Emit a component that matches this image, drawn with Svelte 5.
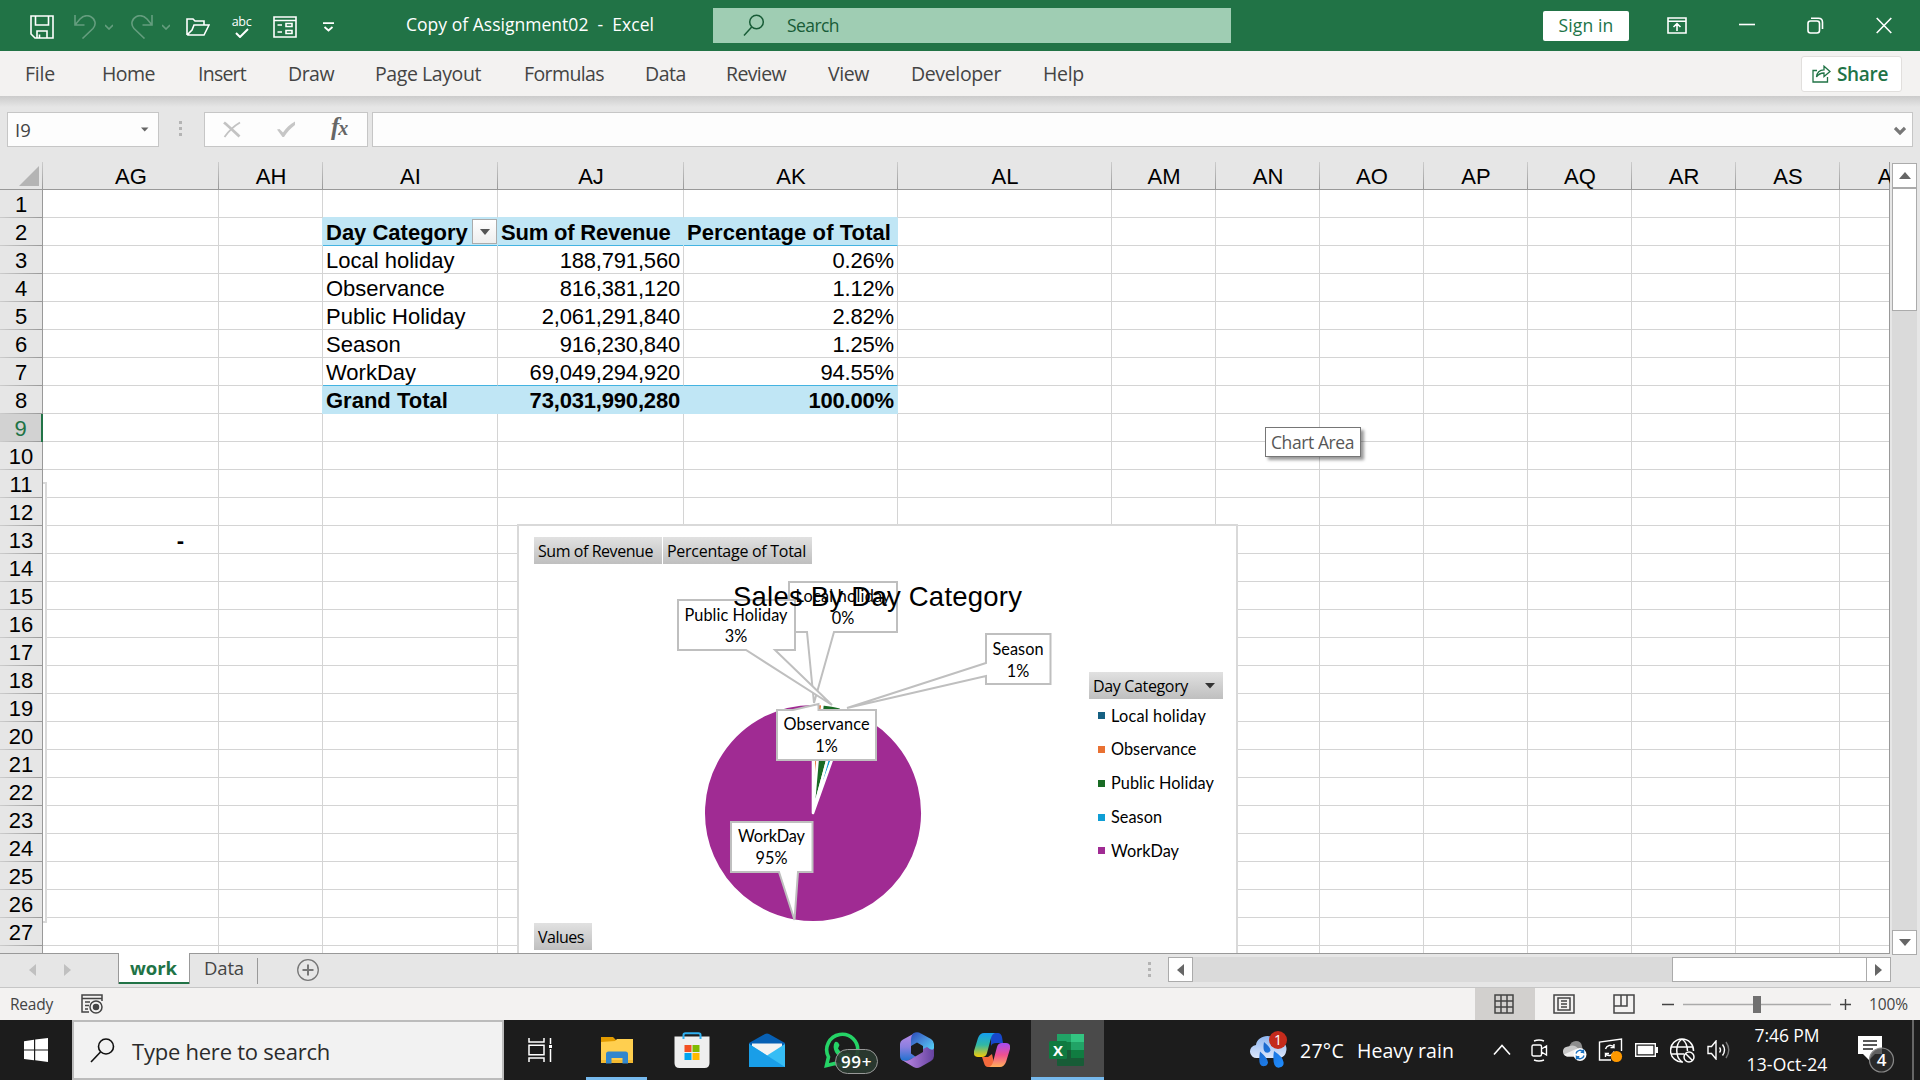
<script>
  const tabs = [
    ['File', 25, 30], ['Home', 102, 53], ['Insert', 198, 48], ['Draw', 288, 46],
    ['Page Layout', 375, 106], ['Formulas', 524, 80], ['Data', 645, 41],
    ['Review', 726, 60], ['View', 828, 41], ['Developer', 911, 90], ['Help', 1043, 41]
  ].map(([name, x, w], i, all) => ({ name, w, gap: i ? x - all[i - 1][1] - all[i - 1][2] : x }));

  const cols = [
    ['AG', 176], ['AH', 104], ['AI', 175], ['AJ', 186], ['AK', 214], ['AL', 214],
    ['AM', 104], ['AN', 104], ['AO', 104], ['AP', 104], ['AQ', 104], ['AR', 104], ['AS', 104], ['AT', 50]
  ].map(([id, w]) => ({ id, w }));
  const rows = Array.from({ length: 28 }, (_, i) => i + 1);

  const pivot = {
    2: ['Day Category', 'Sum of Revenue', 'Percentage of Total'],
    3: ['Local holiday', '188,791,560', '0.26%'],
    4: ['Observance', '816,381,120', '1.12%'],
    5: ['Public Holiday', '2,061,291,840', '2.82%'],
    6: ['Season', '916,230,840', '1.25%'],
    7: ['WorkDay', '69,049,294,920', '94.55%'],
    8: ['Grand Total', '73,031,990,280', '100.00%']
  };
  function cell(r, id) {
    const k = ['AI', 'AJ', 'AK'].indexOf(id);
    if (k >= 0) return pivot[r]?.[k] ?? '';
    return r === 13 && id === 'AG' ? '-' : '';
  }

  const legend = [
    ['Local holiday', '#156082', 95], ['Observance', '#e97132', 85.5], ['Public Holiday', '#196b24', 103],
    ['Season', '#0f9ed5', 51], ['WorkDay', '#a02b93', 68]
  ];

  // Pie geometry, relative to the chart frame
  const cx = 296, cy = 289, radius = 109.3;
  const shares = [[0.26, '#156082'], [1.12, '#e97132'], [2.82, '#196b24'], [1.25, '#0f9ed5'], [94.55, '#a02b93']];
  let start = 0;
  const slices = shares.map(([pct, color]) => {
    const a = (start / 100) * Math.PI * 2;
    start += pct;
    const b = (start / 100) * Math.PI * 2;
    const p = (t) => `${cx + radius * Math.sin(t)} ${cy - radius * Math.cos(t)}`;
    return { color, d: `M${cx} ${cy}L${p(a)}A${radius} ${radius} 0 ${pct > 50 ? 1 : 0} 1 ${p(b)}Z` };
  });

  // Tracks a label so that it takes exactly the given width
  function fit(node, width) {
    const now = node.getBoundingClientRect().width;
    node.style.letterSpacing = `${(width - now) / node.textContent.length}px`;
  }
</script>

<div class="app">
  <header class="titlebar">
    <div class="qat">
      <svg width="24" height="24" viewBox="0 0 24 24" class="ln"><path d="M1 1h22v22H5l-4-4zM5.500 1v9h13V1M7 23v-7h10v7M9.500 19.500V23" /></svg>
      <svg style:margin-left="20px" width="22" height="24" viewBox="0 0 22 24" class="ln dim"><path d="M1 0v10h9.500M1 10L6 4C9 1 13 0 16.500 1.500c5 2.500 6 8 2.500 12L8.500 23.500" /></svg>
      <svg style:margin-left="9px" width="8" height="6" viewBox="0 0 8 6" class="ln dim"><path d="M0 1l4 4 4-4" /></svg>
      <svg style:margin-left="18px" width="22" height="24" viewBox="0 0 22 24" class="ln dim"><path d="M21 0v10h-9.500M21 10L16 4C13 1 9 0 5.500 1.500c-5 2.500-6 8-2.500 12l10.500 10" /></svg>
      <svg style:margin-left="9px" width="8" height="6" viewBox="0 0 8 6" class="ln dim"><path d="M0 1l4 4 4-4" /></svg>
      <svg style:margin-left="16px" width="24" height="18" viewBox="0 0 24 18" class="ln"><path d="M1 17V1h6l2 2h9v4M1 17h17l5-10H8l-2 5-5 5" /></svg>
      <span class="abc"><i>abc</i><svg width="14" height="10" viewBox="0 0 14 10" class="ln"><path d="M1 5l4 4 8-8" stroke-width="2" /></svg></span>
      <svg style:margin-left="21px" width="24" height="22" viewBox="0 0 24 22" class="ln"><path d="M1 1h22v20H1zM1 4.500h22M4.500 9h4.500M4.500 16h4.500M13 7.500h6v3h-6zM13 14.500h6v3h-6z" /></svg>
      <svg style:margin-left="26px" width="11" height="10" viewBox="0 0 11 10" class="ln"><path d="M0 1.200h11M1.500 5l4 3.500 4-3.500" stroke-width="1.800" /></svg>
    </div>
    <div class="doc"><span use:fit={248}>Copy of Assignment02&nbsp; -&nbsp; Excel</span></div>
    <div class="find">
      <svg width="22" height="23" viewBox="0 0 22 23"><circle cx="13.500" cy="8" r="6.800" /><path d="M8.700 13L1 21.500" /></svg>
      <span use:fit={52}>Search</span>
    </div>
    <div class="signin"><span use:fit={55}>Sign in</span></div>
    <div class="win">
      <svg width="20" height="17" viewBox="0 0 20 17" class="ln"><path d="M1 1h18v15H1zM1 4.200h18M10 14V7M6.500 10L10 6.700 13.500 10" /></svg>
      <svg width="16" height="17" viewBox="0 0 16 17" class="ln"><path d="M0 7.500h16" /></svg>
      <svg width="17" height="17" viewBox="0 0 17 17" class="ln"><rect x="1" y="4" width="11.500" height="12" rx="2.500" /><path d="M4 1.200h7.500c3 0 4 1.500 4 4V12" /></svg>
      <svg width="16" height="17" viewBox="0 0 16 17" class="ln"><path d="M.7 1l14.600 15M15.300 1L.7 16" /></svg>
    </div>
  </header>

  <nav class="ribbon">
    {#each tabs as t}
      <span class="tab" style:margin-left="{t.gap}px" style:width="{t.w}px"><span use:fit={t.w}>{t.name}</span></span>
    {/each}
    <div class="share">
      <svg width="19" height="18" viewBox="0 0 19 18"><path d="M5 5.500H1V17h14.500v-5M4.500 12c.5-5 3-7.200 7.500-7.200V1.200l6 5.300-6 5V8C8.500 8 6.500 9 4.500 12z" /></svg>
      <b use:fit={51}>Share</b>
    </div>
  </nav>

  <div class="formula">
    <div class="box name"><span use:fit={16}>I9</span><svg width="9" height="6" viewBox="0 0 9 6"><path d="M1 .5h7.500L4.700 4.500z" fill="#666" /></svg></div>
    <div class="dots"><i></i><i></i><i></i></div>
    <div class="box tools">
      <svg width="18" height="17" viewBox="0 0 18 17"><path d="M1 1.500c5 4 10 9 15.500 14" fill="none" stroke="#c3c3c3" stroke-width="2.800" /><path d="M17 1.500C11 5 5 11 1.500 16" fill="none" stroke="#c3c3c3" stroke-width="1.800" /></svg>
      <svg width="20" height="17" viewBox="0 0 20 17"><path d="M1 8.500l2.500-.5 3.500 3.500C10 7 14 3 19 .5V4C15 7 11 11 8 16H6.500z" fill="#c6c6c6" /></svg>
      <em>f<small>x</small></em>
    </div>
    <div class="box input"><svg width="12" height="10" viewBox="0 0 12 10"><path d="M1 2l5 5 5-5" fill="none" stroke="#777" stroke-width="3.200" /></svg></div>
  </div>

  <main class="sheet">
    <div class="grid">
      <div class="colhead">
        <div class="corner"><svg width="20" height="20" viewBox="0 0 20 20"><path d="M20 0v20H0z" fill="#b4b4b4" /></svg></div>
        {#each cols as c}
          <div class="ch" class:part={c.id === 'AT'} style:width="{c.w}px"><span>{c.id}</span></div>
        {/each}
      </div>
      <div class="cells">
        {#each rows as r}
          <div class="row">
            <div class="rh" class:sel={r === 9}>{r}</div>
            {#each cols as c}
              {@const p = ['AI', 'AJ', 'AK'].includes(c.id)}
              <div
                class="cell"
                class:band={p && (r === 2 || r === 8)}
                class:above={p && r === 1}
                class:under={p && (r === 2 || r === 7)}
                class:num={p && c.id !== 'AI' && r !== 2}
                class:tight={r === 2 && c.id === 'AJ'}
                class:loose={r === 2 && c.id === 'AK'}
                class:dash={c.id === 'AG'}
                style:width="{c.w}px"
              >
                {#if cell(r, c.id)}<span>{cell(r, c.id)}</span>{/if}
                {#if r === 2 && c.id === 'AI'}
                  <div class="filter"><svg width="10" height="6" viewBox="0 0 10 6"><path d="M0 0h10L5 6z" fill="#555" /></svg></div>
                {/if}
              </div>
            {/each}
          </div>
        {/each}
        <div class="frame-edge"></div>
        <div class="chart">
          <svg width="717" height="430" viewBox="0 0 717 430">
            <g transform="translate(-2 -2)">
              <g stroke="#fff" stroke-width="2.600" stroke-linejoin="round">
                {#each slices as s}<path d={s.d} fill={s.color} />{/each}
              </g>
              <g class="call">
                <path d="M272 58h108v50h-63l-20 71-7-71h-18z" />
                <text x="326" y="78" textLength="95">Local holiday</text><text x="326" y="100">0%</text>
                <path d="M260 186h16l25.500-6v6H359v50h-99z" />
                <text x="309.500" y="206" textLength="86">Observance</text><text x="309.500" y="228">1%</text>
                <path d="M161 76h117v50h-20l57 55-86-55h-68z" />
                <text x="219" y="96.500" textLength="103">Public Holiday</text><text x="219" y="118">3%</text>
                <path d="M469 110h64.500v50H469v-8l-139 32 139-45z" />
                <text x="501" y="130.500" textLength="51">Season</text><text x="501" y="152.500">1%</text>
                <path d="M214 298h81.500v50H281l-3.500 48L262 348h-48z" />
                <text x="254.500" y="318" textLength="67">WorkDay</text><text x="254.500" y="340">95%</text>
              </g>
              <text class="ctitle" x="216" y="82" textLength="289">Sales By Day Category</text>
            </g>
          </svg>
          <div class="fb b1"><span use:fit={115}>Sum of Revenue</span></div>
          <div class="fb b2"><span use:fit={139}>Percentage of Total</span></div>
          <div class="fb b3"><span use:fit={46}>Values</span></div>
          <div class="fb b4"><span use:fit={95}>Day Category</span><svg width="10" height="6" viewBox="0 0 10 6"><path d="M0 0h10L5 5.500z" fill="#333" /></svg></div>
          <div class="legend">
            {#each legend as [name, color, w]}
              <div><i style:background={color}></i><span use:fit={w}>{name}</span></div>
            {/each}
          </div>
        </div>
        <div class="tip"><span use:fit={83}>Chart Area</span></div>
      </div>
    </div>
    <div class="vscroll">
      <div class="btn"><svg width="12" height="7" viewBox="0 0 12 7"><path d="M6 0l6 7H0z" fill="#666" /></svg></div>
      <div class="thumb"></div>
      <div class="track"></div>
      <div class="btn"><svg width="12" height="7" viewBox="0 0 12 7"><path d="M6 7l6-7H0z" fill="#666" /></svg></div>
    </div>
  </main>

  <div class="sheettabs">
    <div class="arrows">
      <svg width="7" height="12" viewBox="0 0 7 12"><path d="M7 0v12L0 6z" fill="#c0c0c0" /></svg>
      <svg width="7" height="12" viewBox="0 0 7 12"><path d="M0 0v12l7-6z" fill="#c0c0c0" /></svg>
    </div>
    <div class="st on"><b use:fit={47}>work</b></div>
    <div class="st"><span use:fit={40}>Data</span></div>
    <svg class="plus" width="24" height="24" viewBox="0 0 24 24"><circle cx="12" cy="12" r="10.300" /><path d="M12 6.500v11M6.500 12h11" stroke-width="2" /></svg>
    <div class="dots small"><i></i><i></i><i></i></div>
    <div class="hscroll">
      <div class="hb"><svg width="7" height="12" viewBox="0 0 7 12"><path d="M7 0v12L0 6z" fill="#666" /></svg></div>
      <div class="ht"></div>
      <div class="hthumb"></div>
      <div class="hb"><svg width="7" height="12" viewBox="0 0 7 12"><path d="M0 0v12l7-6z" fill="#666" /></svg></div>
    </div>
  </div>

  <div class="status">
    <span class="ready"><span use:fit={43}>Ready</span></span>
    <svg class="rec" width="23" height="20" viewBox="0 0 23 20"><path d="M8 18H1V1h20v6M1 4.500h20M4 8h5M4 11.500h4M4 15h3" /><circle cx="15" cy="13" r="6" /><circle cx="15" cy="13" r="2.500" fill="#444" /></svg>
    <div class="views">
      <div class="v on"><svg width="20" height="20" viewBox="0 0 20 20"><path d="M1 1h18v18H1zM1 7h18M1 13h18M7 1v18M13 1v18" /></svg></div>
      <div class="v"><svg width="22" height="20" viewBox="0 0 22 20"><path d="M1 1h20v18H1zM5 4h12v12H5zM8 7h6M8 10h6M8 13h6" /></svg></div>
      <div class="v"><svg width="22" height="20" viewBox="0 0 22 20"><path d="M1 1h20v18H1zM1 12h13V1M8 1v11" /></svg></div>
    </div>
    <svg class="zoom" width="190" height="20" viewBox="0 0 190 20"><path d="M1 10.500h12M179 10.500h11M184.500 5v11" stroke="#444" stroke-width="1.400" /><path d="M22 10.500h148" stroke="#aaa" stroke-width="1.600" /><path d="M92 2h8v17h-8z" fill="#707070" /></svg>
    <span class="pct"><span use:fit={39}>100%</span></span>
  </div>

  <footer class="taskbar">
    <div class="startb"><svg width="24" height="24" viewBox="0 0 24 24" fill="#fff"><path d="M0 3.300L10 1.800V11.400H0zM11.200 1.600L24 0v11.400H11.200zM0 12.600h10v9.700L0 20.900zM11.200 12.600H24V24l-12.800-1.700z" /></svg></div>
    <div class="tsearch">
      <svg width="25" height="25" viewBox="0 0 25 25"><circle cx="16" cy="8.500" r="7.500" /><path d="M10.500 14L1 24" /></svg>
      <span use:fit={198}>Type here to search</span>
    </div>
    <div class="taskview"><svg width="24" height="24" viewBox="0 0 24 24"><path d="M1 0v4h15V0M1 24v-4h15v4M1 7.200h15v9.600H1zM22.500 0v6M22.500 11v13" /><path d="M21 7h3v3h-3z" fill="#fff" stroke="none" /></svg></div>
    <div class="app-t run"><svg width="34" height="28" viewBox="0 0 34 28"><path d="M1 1h12l3 3v8H1z" fill="#e29b00" /><path d="M1 6l14-1 2-2h16v24H1z" fill="#ffcf4f" /><path d="M1 24h32v3H1z" fill="#f2b931" /><path d="M6 27.500V18q0-2.500 2.500-2.500h17Q28 15.500 28 18v9.500h-5.500V22h-11v5.500z" fill="#3287ce" /></svg></div>
    <div class="app-t"><svg width="36" height="36" viewBox="0 0 36 36"><path d="M.5 4.500h35V31q0 5-5 5h-25q-5 0-5-5z" fill="#eee" /><path d="M9.500 7V3q0-1.800 2-1.800h13q2 0 2 1.800v4" fill="none" stroke="#2fb0f0" stroke-width="2" /><path d="M10.500 13h7v7h-7z" fill="#f25022" /><path d="M18.500 13h7v7h-7z" fill="#7fba00" /><path d="M10.500 21h7v7h-7z" fill="#00a4ef" /><path d="M18.500 21h7v7h-7z" fill="#ffb900" /></svg></div>
    <div class="app-t"><svg width="36" height="34" viewBox="0 0 36 34"><path d="M0 10L16 1q2-1 4 0l16 9v4H0z" fill="#0760b4" /><path d="M3 10.500h30V24H3z" fill="#f3f3f3" /><path d="M0 11l18 11.500L36 11v23H0z" fill="#36bdf5" /><path d="M0 11l36 23H0z" fill="#199ee8" /></svg></div>
    <div class="app-t wa">
      <svg width="36" height="36" viewBox="0 0 36 36"><path d="M2.500 33.500l2-8.500A15.500 15.500 0 1 1 11 31.500z" fill="none" stroke="#25d366" stroke-width="3.600" /><path d="M11 10q3-1 4.500 3L14 16.500q2 4 6.500 6l2.500-2q4 1 4 4-1 4-6 3.500C12 25 7 16 11 10z" fill="#25d366" /></svg>
      <em class="cnt"><span use:fit={31}>99+</span></em>
    </div>
    <div class="app-t"><svg width="34" height="36" viewBox="0 0 34 36">
      <defs>
        <linearGradient id="ma" x1="0" y1="0" x2="0" y2="1"><stop offset="0" stop-color="#b98be6" /><stop offset=".5" stop-color="#8a7fe0" /><stop offset="1" stop-color="#1f72d0" /></linearGradient>
        <linearGradient id="mb" x1="0" y1="0" x2="1" y2="1"><stop offset="0" stop-color="#2b4bb8" /><stop offset=".5" stop-color="#4a92dd" /><stop offset="1" stop-color="#55e0fb" /></linearGradient>
        <linearGradient id="mc" x1="0" y1="0" x2="1" y2="0"><stop offset="0" stop-color="#c08be8" /><stop offset="1" stop-color="#65429f" /></linearGradient>
      </defs>
      <path d="M15 1L3 7.500Q0 9 0 12.500V24q0 5 5 5 3 0 6-2l5-2-5-3.500v-8L14 11z" fill="url(#ma)" />
      <path d="M13 1.500q4-2.500 8 0L31 7q3 2 3 5v9q-4-1-7 0l-4-3v-4l-6-3.500-6 3.500V7q0-3 2-5.500z" fill="url(#mb)" />
      <path d="M34 20v4q0 3-3 5l-10.500 6q-3.500 2-7 0L2 28q5 2 9-1l12-7v-3l4-2q6 5 7 1z" fill="url(#mc)" /></svg></div>
    <div class="app-t"><svg width="36" height="34" viewBox="0 0 36 34">
      <defs>
        <linearGradient id="ca" x1="0" y1="0" x2="0" y2="1"><stop offset="0" stop-color="#139ef0" /><stop offset=".5" stop-color="#32b8a4" /><stop offset="1" stop-color="#f6cc05" /></linearGradient>
        <linearGradient id="cb" x1="0" y1="0" x2="0" y2="1"><stop offset="0" stop-color="#a64cf5" /><stop offset=".5" stop-color="#f0508f" /><stop offset="1" stop-color="#ffb05a" /></linearGradient>
      </defs>
      <path d="M17 0h7q3 0 4 4l1 6h-7q-4 0-5 3z" fill="#1748cb" /><path d="M8 24h6l4-3 2 9-2 4h-4q-3 0-4-4z" fill="#f36a3d" /><path d="M10 0h11q-3 1-4 5l-4 15q-1 4-5 4H4q-5 0-4-6L4 5q2-5 6-5z" fill="url(#ca)" /><path d="M28 10h4q5 0 4 6l-4 13q-2 5-6 5H15q3-1 4-5l4-15q1-4 5-4z" fill="url(#cb)" /></svg></div>
    <div class="app-t xl"><svg width="36" height="34" viewBox="0 0 36 34"><path d="M8 1h14v8H8z" fill="#21a366" /><path d="M22 1h13v8H22z" fill="#33c481" /><path d="M8 9h14v8H8z" fill="#107c41" /><path d="M22 9h13v8H22z" fill="#21a366" /><path d="M8 17h27v15q0 1-1 1H9q-1 0-1-1z" fill="#185c37" /><path d="M22 17h13v8H22z" fill="#107c41" /><rect y="8" width="18" height="18" rx="1.500" fill="#0f7a40" /><text x="9" y="22.500" text-anchor="middle" font-family="Open Sans, sans-serif" font-weight="700" font-size="15" fill="#fff">X</text></svg></div>
    <div class="weather">
      <svg width="38" height="37" viewBox="0 0 38 37">
        <defs>
          <linearGradient id="cl" x1="0" y1="0" x2="0" y2="1"><stop offset="0" stop-color="#8db5ef" /><stop offset="1" stop-color="#dce6fa" /></linearGradient>
          <linearGradient id="dr" x1="0" y1="0" x2="1" y2="1"><stop offset="0" stop-color="#1a62c4" /><stop offset="1" stop-color="#1f8dff" /></linearGradient>
        </defs>
        <path d="M7 27A6.500 6.500 0 0 1 6 14C7 5 21 1 26 10c8 0 12 4 10 11-1 4-4 6-8 6z" fill="url(#cl)" />
        <path d="M14 11q7 6 6.500 8.500a3.500 3.500 0 0 1-6.500 0q-1-3 0-8.500zM10 20.500q8 7 8 11a4.300 4.300 0 0 1-8 1.500q-1.500-4 0-12.500zM24 20q9 6 9.500 11a4.800 4.800 0 0 1-9 3q-2-5-.5-14z" fill="url(#dr)" />
        <circle cx="28" cy="9" r="9" fill="#c42b1c" /><text x="28" y="14" text-anchor="middle" font-family="Open Sans, sans-serif" font-size="14" fill="#fff">1</text>
      </svg>
      <span class="deg"><span use:fit={44}>27°C</span></span>
      <span use:fit={97}>Heavy rain</span>
    </div>
    <div class="tray">
      <svg width="18" height="12" viewBox="0 0 18 12" class="ln"><path d="M1 10.500L9 1.500l8 9" /></svg>
      <svg style:margin-left="20px" width="17" height="23" viewBox="0 0 17 23" class="ln"><path d="M2.500 6h6.500q1.500 0 1.500 1.500v8q0 1.500-1.500 1.500H2.500Q1 17 1 15.500v-8Q1 6 2.500 6zM10.500 10l5-3v9l-5-3M3 2q5-2 10 0M3 21q5 2 10 0" stroke-width="1.400" /></svg>
      <svg style:margin-left="14px" width="25" height="23" viewBox="0 0 25 23"><path d="M7 8q2-6 7-6 5 0 6 5l1 6-8 3z" fill="#8d8d8d" /><path d="M5 17.500a5 5 0 0 1-1-9.500l6-1.500q4 0 6 3l-4 8z" fill="#c8c8c8" /><path d="M5 17.500a5 5 0 0 1-3-2L14 10l-2 7.500z" fill="#efefef" /><circle cx="18" cy="15.500" r="6.500" fill="#fff" /><path d="M14 14.500a4.200 4.200 0 0 1 7.500-1.500V10.500M22 16.500a4.200 4.200 0 0 1-7.500 1.500V20.500M21.500 13.300h-2.800M14.500 17.700h2.800" fill="none" stroke="#1a73c4" stroke-width="1.400" /></svg>
      <svg style:margin-left="11px" width="26" height="25" viewBox="0 0 26 25"><path d="M23.500 13V1L1.500 4v18H13" fill="none" stroke="#fff" stroke-width="1.400" /><path d="M7.500 11a5 5 0 0 1 8.500-2V6M16 9.500h-3.500M16 13.500a5 5 0 0 1-8.500 2.500v3M7.500 15.500H11" fill="none" stroke="#fff" stroke-width="1.400" /><circle cx="18.500" cy="18.500" r="5.600" fill="#f90" /></svg>
      <svg style:margin-left="11px" width="23" height="14" viewBox="0 0 23 14"><path d="M.7.7h19.600v12.600H.7z" fill="none" stroke="#fff" stroke-width="1.400" /><path d="M2.700 2.700h15.600v8.600H2.700zM21 4h2v6h-2z" fill="#fff" /></svg>
      <svg style:margin-left="12px" width="25" height="25" viewBox="0 0 25 25" class="ln"><path d="M13 24A11.500 11.500 0 1 1 23.500 13M1.500 9h21M1.500 16H14M12 1C5 6 5 19 12 24M12 1c4 3 5.500 7 5.500 12" stroke-width="1.500" /><circle cx="19" cy="19" r="5" stroke-width="1.500" /><path d="M15.500 15.500l7 7" stroke-width="1.500" /></svg>
      <svg style:margin-left="12px" width="24" height="20" viewBox="0 0 24 20" class="ln"><path d="M1 6.500h3.500L9 1v18l-4.500-5.500H1zM12.500 7.500q2 2.500 0 5M15.500 4.500q4 5.500 0 11" stroke-width="1.400" /><path d="M19 2q5.500 8 0 16" stroke="#777" stroke-width="1.400" /></svg>
    </div>
    <div class="clock"><span><span use:fit={65}>7:46 PM</span></span><span><span use:fit={81}>13-Oct-24</span></span></div>
    <svg class="note" width="38" height="38" viewBox="0 0 38 38"><path d="M1 1h24v18H18l-6 6-6-6H1z" fill="#fff" /><path d="M6 6h14M6 10h14M6 14h10" stroke="#222" stroke-width="1.400" /><circle cx="24.500" cy="25" r="12" fill="#2d2d2dc0" stroke="#888" stroke-width="1.200" /><text x="24.500" y="31" text-anchor="middle" font-family="Open Sans, sans-serif" font-size="17" font-weight="600" fill="#fff">4</text></svg>
    <div class="edge"></div>
  </footer>
</div>

<style>
  :global(body) { margin: 0; overflow: hidden; }
  .app { width: 1920px; height: 1080px; display: flex; flex-direction: column; overflow: hidden; background: #e6e6e6; font-family: 'Open Sans', 'Noto Sans', sans-serif; white-space: nowrap; color: #444; }
  .app * { box-sizing: border-box; }
  svg { flex: none; display: block; }
  .ln { fill: none; stroke: #fff; stroke-width: 1.6; }
  .dim { opacity: .3; }

  .titlebar { height: 51px; flex: none; background: #217346; color: #fff; display: flex; align-items: center; font-size: 17.500px; }
  .qat { width: 376px; padding-left: 30px; display: flex; align-items: center; padding-top: 2px; }
  .abc { margin-left: 21px; width: 21px; display: flex; flex-direction: column; align-items: center; }
  .abc i { font-style: normal; font-size: 12.500px; line-height: 13px; letter-spacing: -.3px; }
  .doc { width: 337px; padding: 0 0 3px 30px; }
  .find { width: 518px; height: 35px; background: #9fcdb3; color: #185c37; display: flex; align-items: center; padding: 0 0 1px 30px; gap: 22px; }
  .find svg { fill: none; stroke: #185c37; stroke-width: 1.500; }
  .signin { margin-left: 312px; width: 86px; height: 30px; border-radius: 2px; background: #fff; color: #217346; display: flex; align-items: center; justify-content: center; padding-bottom: 1px; }
  .win { display: flex; align-items: center; margin-left: 38px; gap: 52px; }

  .ribbon { height: 45px; flex: none; background: #f3f2f1; display: flex; align-items: center; font-size: 19.500px; }
  .tab { display: block; }
  .share { margin-left: auto; margin-right: 18px; width: 101px; height: 36px; border: 1px solid #e1dfdd; border-radius: 3px; background: #fff; color: #217346; display: flex; align-items: center; padding-left: 10px; gap: 6px; }
  .share svg { fill: none; stroke: #217346; stroke-width: 1.300; }
  .share b { font-size: 19px; font-weight: 600; }

  .formula { height: 66px; flex: none; padding: 16px 7px 0; display: flex; background: linear-gradient(#cbcbcb, #e6e6e6 11px); }
  .box { height: 35px; border: 1px solid #c6c6c6; background: #fdfdfd; display: flex; align-items: center; }
  .name { width: 152px; justify-content: space-between; padding: 0 9px 0 7px; font-size: 18.500px; }
  .dots { width: 45px; display: flex; flex-direction: column; align-items: center; gap: 3px; padding: 9px 1px 0 0; }
  .dots i { width: 3px; height: 3px; background: #b4b4b4; }
  .tools { width: 164px; padding-left: 18px; gap: 35px; }
  .tools em { font: italic bold 25px 'Liberation Serif', serif; color: #666; margin: -6px 0 0 0; letter-spacing: -1px; }
  .tools small { font-size: 20px; }
  .input { width: 1542px; margin-left: 4px; justify-content: flex-end; padding: 2px 6px 0 0; }

  .sheet { height: 793px; flex: none; display: flex; }
  .grid { width: 1890px; height: 792px; border-bottom: 1px solid #999; border-right: 1px solid #999; }
  .colhead { height: 28px; display: flex; border-bottom: 1px solid #999; font: 22px/27px 'Liberation Sans', Arial, sans-serif; color: #000; background: #e6e6e6; }
  .corner { width: 43px; flex: none; padding: 4px 3px 0 19px; background: linear-gradient(#ccc, #999) right / 1px 100% no-repeat; }
  .ch { text-align: center; overflow: hidden; background: linear-gradient(#ccc, #999) right / 1px 100% no-repeat; padding-top: 1px; flex: none; }
  .part { background: none; }
  .ch.part span { display: block; width: 104px; margin-left: -1px; }
  .cells { position: relative; height: 763px; overflow: hidden; background: #fff; font: 22px/27px 'Liberation Sans', Arial, sans-serif; color: #000; }
  .row { display: flex; height: 28px; }
  .rh { width: 43px; flex: none; text-align: center; padding-top: 1px; border-right: 1px solid #999; background: linear-gradient(90deg, #ccc, #999) bottom / 100% 1px no-repeat #e6e6e6; }
  .rh.sel { background-color: #d2d2d2; color: #217346; border-right: 2px solid #217346; }
  .cell { height: 28px; flex: none; border-right: 1px solid #d4d4d4; border-bottom: 1px solid #d4d4d4; display: flex; padding: 1px 2px 0 3px; }
  .above { border-bottom-color: #c0e6f5; }
  .band { background: #c0e6f5; border-color: #c0e6f5; font-weight: 700; box-shadow: -1px 0 #c0e6f5; }
  .under { border-bottom-color: #44b3e1; }
  .num { justify-content: flex-end; padding-right: 3px; letter-spacing: -.18px; }
  .tight { letter-spacing: -.2px; }
  .loose { letter-spacing: .08px; }
  .dash { justify-content: flex-end; padding-right: 34px; font-weight: 700; }
  .filter { width: 25px; height: 25px; margin: 0 -2px 0 auto; border: 1px solid #ababab; background: linear-gradient(#fff, #eee); display: flex; align-items: center; justify-content: center; }
  .frame-edge { position: absolute; left: 43px; top: 292px; width: 4px; height: 441px; border: 2px solid #d9d9d9; border-left: 0; background: #fff; }

  .chart { position: absolute; left: 517px; top: 334px; width: 721px; height: 460px; border: 2px solid #d9d9d9; background: #fff; }
  .call path { fill: #fff; stroke: #bfbfbf; stroke-width: 2; }
  .call text { font: 16.300px Lato, sans-serif; text-anchor: middle; }
  .ctitle { font: 27.500px 'Liberation Sans', Arial, sans-serif; }
  .fb { position: absolute; height: 27px; background: linear-gradient(#e1e1e1, #bfbfbf); font: 16px/26px 'Open Sans', sans-serif; padding-left: 4px; display: flex; align-items: center; }
  .b1 { left: 15px; top: 11px; width: 128px; }
  .b2 { left: 144px; top: 11px; width: 149px; }
  .b3 { left: 15px; top: 397px; width: 58px; }
  .b4 { left: 570px; top: 146px; width: 134px; justify-content: space-between; padding-right: 8px; }
  .legend { position: absolute; left: 579px; top: 173px; font: 16.300px/33.750px Lato, sans-serif; }
  .legend div { display: flex; align-items: center; gap: 6px; height: 33.750px; }
  .legend span { margin-top: -1px; }
  .legend i { width: 7px; height: 7px; }
  .tip { position: absolute; left: 1265px; top: 237px; width: 96px; height: 30px; border: 1px solid #767676; background: #fff; color: #575757; font: 17.500px/28px 'Open Sans', sans-serif; padding-left: 5px; box-shadow: 3px 3px 3px #0006; }

  .vscroll { width: 25px; margin: 1px 0 0 2px; display: flex; flex-direction: column; }
  .btn { height: 25px; flex: none; border: 1px solid #ababab; background: #fff; display: flex; align-items: center; justify-content: center; }
  .thumb { height: 123px; margin-top: 0; border: 1px solid #ababab; background: #fff; }
  .track { flex: 1; background: #dadada; }

  .sheettabs { height: 34px; flex: none; border-bottom: 1px solid #c6c6c6; display: flex; align-items: flex-start; margin-top: -1px; font-size: 18.500px; position: relative; }
  .arrows { width: 118px; padding: 10px 0 0 29px; display: flex; gap: 28px; }
  .st { width: 68px; height: 26px; margin-top: 4px; line-height: 20px; padding-left: 14px; border-right: 1px solid #999; }
  .st.on { width: 72px; height: 31px; margin: -1px 0 0; padding-left: 11px; line-height: 30px; background: #fff; color: #217346; border: solid #999; border-width: 0 1px; box-shadow: inset 0 -2px #217346; }
  .st b { font-weight: 700; }
  .plus { margin: 4px 0 0 38px; fill: none; stroke: #777; stroke-width: 1.300; }
  .small { margin-left: 807px; padding-top: 8px; }
  .hscroll { display: flex; height: 25px; margin-top: 3px; margin-left: -4px; width: 723px; }
  .hb { width: 25px; flex: none; border: 1px solid #ababab; background: #fff; display: flex; align-items: center; justify-content: center; }
  .ht { flex: 1; background: #dadada; }
  .hthumb { width: 194px; border: 1px solid #ababab; border-right: 0; background: #fff; }

  .status { height: 32px; flex: none; background: #f3f2f1; display: flex; align-items: center; font-size: 15.500px; }
  .ready { width: 81px; padding-left: 10px; }
  .rec { fill: none; stroke: #444; stroke-width: 1.500; }
  .views { display: flex; margin-left: 1371px; height: 32px; }
  .v { width: 60px; display: flex; align-items: center; justify-content: center; padding: 0 2px 1px 0; }
  .v.on { background: #d2d0ce; }
  .v svg { fill: none; stroke: #444; stroke-width: 1.500; }
  .zoom { margin-left: 6px; }
  .pct { margin-left: 18px; }

  .taskbar { height: 60px; flex: none; background: #1c1c1c; display: flex; align-items: center; color: #fff; font-size: 19.500px; }
  .startb { width: 72px; padding-left: 24px; }
  .tsearch { width: 432px; height: 60px; border: 2px solid #bcbcbc; background: #f2f2f2; color: #2b2b2b; display: flex; align-items: center; padding-left: 16px; gap: 17px; font-size: 22px; }
  .tsearch span { padding-top: 1px; }
  .tsearch svg { fill: none; stroke: #111; stroke-width: 1.600; }
  .taskview { width: 75px; padding-left: 24px; }
  .taskview svg { fill: none; stroke: #fff; stroke-width: 1.500; }
  .app-t { width: 75px; height: 60px; display: flex; align-items: center; justify-content: center; position: relative; }
  .run { background: linear-gradient(#76b9ed, #76b9ed) center bottom / 61px 3px no-repeat; }
  .xl { width: 73px; margin-left: 2px; background: #4a4a4a; border-bottom: 3px solid #76b9ed; padding: 3px 2px 0 0; }
  .cnt { position: absolute; left: 31px; top: 29px; width: 43px; height: 25px; border: 1px solid #999; border-radius: 13px; background: #2b3a30e8; font: 600 17px/23px 'Open Sans', sans-serif; padding-left: 5px; }
  .weather { display: flex; align-items: center; margin-left: 146px; }
  .deg { margin: 0 13px 0 12px; }
  .weather svg { margin-top: -1px; }
  .tray { display: flex; align-items: center; margin-left: 39px; }
  .clock { width: 84px; margin-left: 14px; display: flex; flex-direction: column; align-items: center; font-size: 17.500px; line-height: 29px; }
  .note { margin-left: 28px; margin-top: 8px; }
  .edge { width: 2px; height: 60px; background: #666; margin-left: 17px; }
</style>
